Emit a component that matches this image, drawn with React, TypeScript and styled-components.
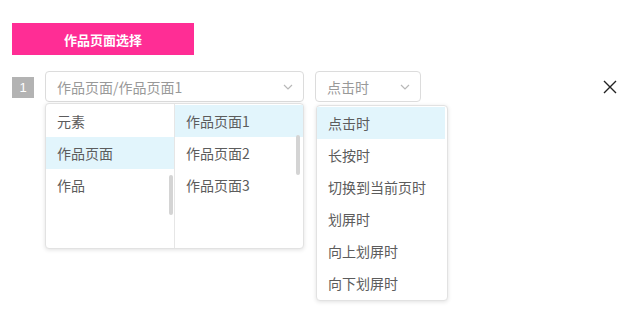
import React from "react";
import styled, { createGlobalStyle } from "styled-components";

const Global = createGlobalStyle`
  html, body { margin: 0; padding: 0; background: #fff; }
  body { font-family: "Noto Sans CJK SC", "Noto Sans", sans-serif; }
  * { box-sizing: border-box; }
`;

const Page = styled.div`
  padding: 23px 0 0 12px;
  width: 639px;
  height: 320px;
`;

const TitleButton = styled.div`
  width: 182px;
  height: 32px;
  background: #ff2d95;
  color: #fff;
  font-size: 13px;
  font-weight: 700;
  display: flex;
  align-items: center;
  justify-content: center;
`;

const Row = styled.div`
  margin-top: 16px;
  display: flex;
  align-items: center;
  padding-right: 21px;
`;

const Badge = styled.div`
  width: 22px;
  height: 21px;
  background: #b3b3b3;
  color: #fff;
  font-family: "Liberation Sans", Arial, sans-serif;
  font-size: 13px;
  display: flex;
  align-items: center;
  justify-content: center;
  margin-top: 2px;
`;

const SelectWrap = styled.div<{ $w: number; $ml: number }>`
  position: relative;
  width: ${(p) => p.$w}px;
  margin-left: ${(p) => p.$ml}px;
`;

const SelectBox = styled.div`
  height: 31px;
  border: 1px solid #dcdcdc;
  border-radius: 4px;
  display: flex;
  align-items: center;
  justify-content: space-between;
  padding: 0 10px 0 11px;
  color: #999;
  font-size: 14px;
`;

const Chevron = () => (
  <svg width="10" height="6" viewBox="0 0 10 6">
    <path d="M1 1 L5 5 L9 1" fill="none" stroke="#b8b8b8" strokeWidth="1.2" />
  </svg>
);

const Menu = styled.div<{ $w: number; $top: number; $left: number }>`
  position: absolute;
  top: ${(p) => p.$top}px;
  left: ${(p) => p.$left}px;
  width: ${(p) => p.$w}px;
  background: #fff;
  border: 1px solid #e2e2e2;
  border-radius: 4px;
  box-shadow: 0 1px 4px rgba(0, 0, 0, 0.12);
  z-index: 2;
`;

const Cascader = styled.div`
  display: flex;
  height: 144px;
`;

const Column = styled.div<{ $divider?: boolean }>`
  position: relative;
  flex: 1;
  padding-top: 1px;
  border-right: ${(p) => (p.$divider ? "1px solid #e6e6e6" : "none")};
`;

const Item = styled.div<{ $active?: boolean }>`
  height: 32px;
  display: flex;
  align-items: center;
  padding-left: 11px;
  font-size: 14px;
  color: #5c5c5c;
  background: ${(p) => (p.$active ? "#e2f5fc" : "transparent")};
`;

const Thumb = styled.div<{ $top: number; $right: number }>`
  position: absolute;
  top: ${(p) => p.$top}px;
  right: ${(p) => p.$right}px;
  width: 4px;
  height: 40px;
  border-radius: 2px;
  background: #d4d4d4;
`;

const List = styled.div`
  padding: 1px 2px 1px 0;
`;

const Close = styled.div`
  margin-left: auto;
  width: 16px;
  height: 16px;
  display: flex;
  align-items: center;
  justify-content: center;
`;

export default function App() {
  const triggers = ["点击时", "长按时", "切换到当前页时", "划屏时", "向上划屏时", "向下划屏时"];
  return (
    <Page>
      <Global />
      <TitleButton>作品页面选择</TitleButton>
      <Row>
        <Badge>1</Badge>
        <SelectWrap $w={259} $ml={11}>
          <SelectBox>
            <span>作品页面/作品页面1</span>
            <Chevron />
          </SelectBox>
          <Menu $w={259} $top={32} $left={0}>
            <Cascader>
              <Column $divider>
                <Item>元素</Item>
                <Item $active>作品页面</Item>
                <Item>作品</Item>
                <Thumb $top={71} $right={1} />
              </Column>
              <Column>
                <Item $active>作品页面1</Item>
                <Item>作品页面2</Item>
                <Item>作品页面3</Item>
                <Thumb $top={31} $right={3} />
              </Column>
            </Cascader>
          </Menu>
        </SelectWrap>
        <SelectWrap $w={106} $ml={11}>
          <SelectBox>
            <span>点击时</span>
            <Chevron />
          </SelectBox>
          <Menu $w={132} $top={34} $left={1}>
            <List>
              {triggers.map((t, i) => (
                <Item key={t} $active={i === 0}>
                  {t}
                </Item>
              ))}
            </List>
          </Menu>
        </SelectWrap>
        <Close>
          <svg width="14" height="14" viewBox="0 0 14 14">
            <path d="M1 1 L13 13 M13 1 L1 13" stroke="#222" strokeWidth="1.4" />
          </svg>
        </Close>
      </Row>
    </Page>
  );
}
